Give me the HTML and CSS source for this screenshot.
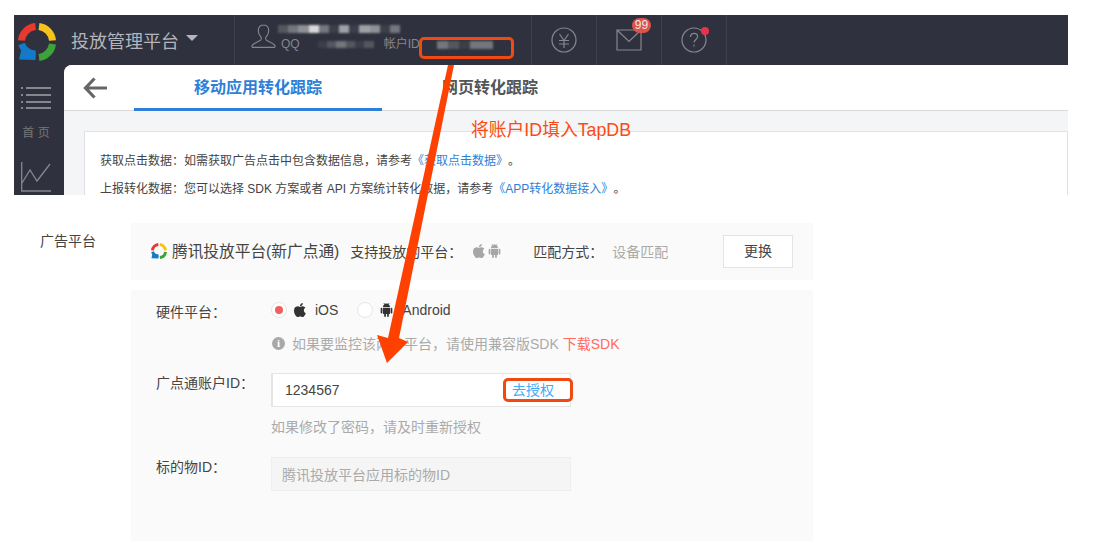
FILE: index.html
```html
<!DOCTYPE html>
<html lang="zh-CN">
<head>
  <meta charset="UTF-8" />
  <title>TapDB 广告平台配置</title>
  <link rel="stylesheet" href="styles.css">
</head>
<body>
  <svg class="defs" width="0" height="0">
    <symbol id="logo" viewBox="0 0 38 38">
      <g fill="none" stroke-width="7">
        <path d="M3.5 17.5A15.5 15.5 0 0 1 17.5 3.5" stroke="#e8392f" />
        <path d="M21 3.5A15.5 15.5 0 0 1 34.5 17.5" stroke="#f8c21c" />
        <path d="M34.500 21A15.500 15.500 0 0 1 21 34.500" stroke="#3ea23a" />
        <path d="M3.500 21A15.500 15.500 0 0 0 17.500 31" stroke="#1479c9" />
      </g>
      <path d="M1 36.500L3.500 26L17.500 28V37z" fill="#1479c9" />
    </symbol>
    <symbol id="apple" viewBox="3.500 3 16 18">
      <path d="M17.050 20.280c-.98.95-2.050.8-3.080.35-1.090-.46-2.090-.48-3.240 0-1.440.62-2.200.44-3.060-.35C2.790 15.250 3.510 7.590 9.050 7.310c1.350.07 2.290.74 3.080.8 1.180-.24 2.310-.93 3.570-.84 1.510.12 2.650.72 3.400 1.800-3.120 1.870-2.380 5.980.48 7.130-.57 1.500-1.310 2.990-2.540 4.090zM12.030 7.250c-.15-2.230 1.660-4.070 3.740-4.250.29 2.580-2.340 4.500-3.740 4.250z" />
    </symbol>
    <symbol id="android" viewBox="1.500 0 21 24">
      <path d="M6 18c0 .55.45 1 1 1h1v3.500c0 .83.67 1.500 1.500 1.500s1.500-.67 1.500-1.500V19h2v3.500c0 .83.67 1.500 1.500 1.500s1.500-.67 1.500-1.500V19h1c.55 0 1-.45 1-1V8H6v10zM3.500 8C2.670 8 2 8.670 2 9.500v7c0 .83.67 1.500 1.500 1.500S5 17.330 5 16.500v-7C5 8.670 4.330 8 3.500 8zm17 0c-.83 0-1.500.67-1.500 1.500v7c0 .83.67 1.500 1.500 1.500s1.500-.67 1.500-1.500v-7c0-.83-.67-1.500-1.500-1.500zm-4.970-5.840l1.300-1.300c.2-.2.2-.51 0-.71-.2-.2-.51-.2-.71 0l-1.480 1.480C13.850 1.230 12.950 1 12 1c-.96 0-1.860.23-2.660.63L7.850.15c-.2-.2-.51-.2-.71 0-.2.2-.2.51 0 .71l1.310 1.310C6.970 3.260 6 5.010 6 7h12c0-1.990-.97-3.750-2.470-4.840z" />
    </symbol>
  </svg>

  <!-- top screenshot -->
  <div class="shot">
    <header class="topbar">
      <div class="brand">
        <svg class="brand-logo"><use href="#logo" /></svg>
        <span class="brand-name">投放管理平台</span>
        <i class="caret"></i>
      </div>
      <div class="user">
        <svg class="user-icon" viewBox="0 0 24 24" fill="none" stroke="#85878d" stroke-width="1.100">
          <path d="M12 .8c-3.400 0-5 2.500-5 5.500 0 2.800 1.200 5 2.500 6.200.6.6.5 2.200-.3 3-1.500 1.300-7.200 2.800-8.200 5.300-.3.800 0 1.700.8 1.700h20.400c.8 0 1.100-.9.8-1.700-1-2.500-6.700-4-8.200-5.300-.8-.8-.9-2.400-.3-3 1.300-1.200 2.500-3.400 2.500-6.200 0-3-1.600-5.500-5-5.500z" />
        </svg>
        <div class="user-info">
          <div class="mosaic name-mosaic">
            <b class="t2"></b><b class="t3"></b><b class="t4"></b><b class="t6"></b><b class="t3"></b><b class="t1"></b><b class="t5"></b><b class="t1"></b><b class="t5"></b><b class="t4"></b><b class="t1"></b><b class="t3"></b>
          </div>
          <div class="user-ids">
            <span>QQ</span>
            <div class="mosaic qq-mosaic"><b class="t1"></b><b class="t2"></b><b class="t3"></b><b class="t2"></b><b class="t1"></b><b class="t2"></b></div>
            <span class="account-label">帐户ID</span>
            <div class="mosaic account-mosaic"><b class="t3"></b><b class="t2"></b><b class="t1"></b><b class="t3"></b><b class="t3"></b></div>
          </div>
        </div>
      </div>
      <div class="tool">
        <svg width="26" height="26" viewBox="0 0 26 26" fill="none" stroke="#85878d" stroke-width="1.200">
          <circle cx="13" cy="13" r="12" />
          <path d="M8.500 7l4.500 6.500L17.500 7M8 13.500h10M8 17h10M13 13.500V21" />
        </svg>
      </div>
      <div class="tool">
        <span class="mail-wrap">
          <svg width="26" height="24" viewBox="0 0 26 24" fill="none" stroke="#85878d" stroke-width="1.200">
            <path d="M1 2h24v20H1zM1 2l12 11.500L25 2" />
          </svg>
          <span class="badge">99</span>
        </span>
      </div>
      <div class="tool">
        <span class="help-wrap">
          <svg width="26" height="26" viewBox="0 0 26 26" fill="none" stroke="#85878d" stroke-width="1.200">
            <circle cx="13" cy="13" r="12" />
            <path d="M9.500 10c0-2.400 1.600-3.600 3.600-3.600s3.500 1.300 3.500 3.200c0 2.800-3.600 2.900-3.600 6" />
            <path d="M13 17.500v2" />
          </svg>
          <i class="dot"></i>
        </span>
      </div>
    </header>
    <div class="shot-body">
      <nav class="sidenav">
        <svg width="30" height="24" viewBox="0 0 30 24" fill="#85878d">
          <path d="M0 1h2v2H0zM5 1h25v2H5zM0 8h2v2H0zM5 8h25v2H5zM0 15h2v2H0zM5 15h25v2H5zM0 21h2v2H0zM5 21h25v2H5z" />
        </svg>
        <span class="nav-label">首 页</span>
        <svg class="nav-chart" width="30" height="32" viewBox="0 0 30 32" fill="none" stroke="#85878d" stroke-width="1.300">
          <path d="M.7 0v29H30M1 21l8-13 7 11L29 2" />
        </svg>
      </nav>
      <main class="content">
        <div class="tabs">
          <svg class="back" width="24" height="22" viewBox="0 0 24 22" fill="none" stroke="#666" stroke-width="3.200">
            <path d="M24 11H3M11.500 1.500L2.500 11l9 9.500" />
          </svg>
          <a class="tab active">移动应用转化跟踪</a>
          <a class="tab">网页转化跟踪</a>
        </div>
        <div class="content-body">
          <div class="panel">
            <p>获取点击数据：如需获取广告点击中包含数据信息，请参考<a>《获取点击数据》</a>。</p>
            <p>上报转化数据：您可以选择 SDK 方案或者 API 方案统计转化数据，请参考<a>《APP转化数据接入》</a>。</p>
          </div>
        </div>
      </main>
    </div>
  </div>

  <!-- lower screenshot -->
  <section class="platform">
    <div class="platform-label">广告平台</div>
    <div class="platform-cards">
      <div class="card summary">
        <svg class="small-logo"><use href="#logo" /></svg>
        <span class="summary-title">腾讯投放平台(新广点通)</span>
        <span class="summary-key">支持投放的平台：</span>
        <svg class="os-icon grey"><use href="#apple" /></svg>
        <svg class="os-icon grey"><use href="#android" /></svg>
        <span class="summary-key match-key">匹配方式：</span>
        <span class="muted">设备匹配</span>
        <button class="swap">更换</button>
      </div>
      <div class="card form">
        <div class="field-label first">硬件平台：</div>
        <div class="field-value">
          <div class="radios">
            <span class="radio checked"></span>
            <svg class="os-icon dark"><use href="#apple" /></svg>
            <span class="radio-text">iOS</span>
            <span class="radio second"></span>
            <svg class="os-icon dark"><use href="#android" /></svg>
            <span class="radio-text">Android</span>
          </div>
          <div class="hint">
            <i class="info">i</i>
            <span>如果要监控该两个平台，请使用兼容版SDK <a class="download">下载SDK</a></span>
          </div>
        </div>
        <div class="field-label account">广点通账户ID：</div>
        <div class="field-value account-value">
          <div class="input">
            <span>1234567</span>
            <a class="auth">去授权</a>
          </div>
          <div class="note">如果修改了密码，请及时重新授权</div>
        </div>
        <div class="field-label target">标的物ID：</div>
        <div class="field-value target-value">
          <div class="input disabled">腾讯投放平台应用标的物ID</div>
        </div>
      </div>
    </div>
  </section>

  <!-- annotations drawn on top of both screenshots -->
  <div class="mark mark-account"></div>
  <div class="mark mark-auth"></div>
  <div class="callout">将账户ID填入TapDB</div>
  <svg class="arrow" width="1094" height="554" viewBox="0 0 1094 554">
    <path d="M448 65L454 65L399 338L408 342L387 363L377 335L388 338z" fill="#fe4100" />
  </svg>
</body>
</html>
```

FILE: styles.css
```css
* {
  box-sizing: border-box;
}
html, body {
  height: 100%;
}
body {
  margin: 0;
  position: relative;
  overflow: hidden;
  background: #fff;
  color: #444;
  font-family: "Liberation Sans", "Noto Sans CJK SC", sans-serif;
  font-size: 14px;
  text-spacing-trim: space-all;
}
p {
  margin: 0;
}
.defs {
  position: absolute;
}

/* top screenshot */
.shot {
  width: 1054px;
  height: 180px;
  margin: 15px 0 0 14px;
  overflow: hidden;
  background: #2f323e;
}
.topbar {
  display: flex;
  height: 50px;
  color: #85878d;
}
.brand {
  display: flex;
  align-items: center;
  width: 221px;
  border-right: 1px solid #3e414c;
}
.brand-logo {
  width: 38px;
  height: 38px;
  margin: 3px 0 0 4px;
}
.brand-name {
  margin-left: 15px;
  font-size: 18px;
  color: #b4b5ba;
}
.caret {
  width: 0;
  height: 0;
  margin: 0 0 5px 7px;
  border: 6px solid transparent;
  border-top-color: #b4b5ba;
  border-bottom: 0;
}
.user {
  display: flex;
  width: 297px;
  padding: 9px 0 0 16px;
  border-right: 1px solid #3e414c;
}
.user-icon {
  width: 25px;
  height: 25px;
}
.user-info {
  margin-left: 2px;
}
.mosaic {
  display: flex;
  filter: blur(1px);
}
.mosaic b {
  display: block;
  flex: 1;
}
.t1 { background: #3c3f4a; }
.t2 { background: #55575f; }
.t3 { background: #74767d; }
.t4 { background: #909196; }
.t5 { background: #a0a1a6; }
.t6 { background: #d8d8da; }
.name-mosaic {
  width: 122px;
  height: 8px;
  margin-top: 1px;
}
.user-ids {
  display: flex;
  align-items: center;
  margin: 4px 0 0 3px;
  font-size: 12px;
  line-height: 14px;
}
.qq-mosaic {
  width: 56px;
  height: 7px;
  margin-left: 18px;
}
.account-label {
  margin-left: 10px;
}
.account-mosaic {
  width: 56px;
  height: 8px;
  margin: 2px 0 0 17px;
}
.tool {
  display: flex;
  align-items: center;
  justify-content: center;
  width: 65px;
  border-right: 1px solid #3e414c;
}
.mail-wrap, .help-wrap {
  position: relative;
  display: flex;
}
.badge {
  position: absolute;
  top: -10px;
  left: 16px;
  width: 19px;
  height: 15px;
  border-radius: 8px;
  background: #d8544c;
  color: #f3e3e2;
  font-size: 12px;
  line-height: 14px;
  text-align: center;
}
.dot {
  position: absolute;
  top: 0;
  right: -2px;
  width: 8px;
  height: 8px;
  border-radius: 50%;
  background: #e8334a;
}
.shot-body {
  display: flex;
  height: 130px;
}
.sidenav {
  display: flex;
  flex-direction: column;
  align-items: center;
  flex: none;
  width: 50px;
  padding: 21px 6px 0 0;
}
.nav-label {
  margin-top: 15px;
  font-size: 12px;
  line-height: 16px;
  color: #777;
}
.nav-chart {
  flex: none;
  margin-top: 21px;
}
.content {
  flex: 1;
  overflow: hidden;
  border-top-left-radius: 8px;
  background: #f4f5f6;
}
.tabs {
  display: flex;
  align-items: center;
  height: 46px;
  padding-left: 19px;
  background: #fff;
  border-bottom: 1px solid #d9d9d9;
}
.back {
  margin: 1px 27px 0 0;
}
.tab {
  width: 248px;
  height: 46px;
  font-size: 16px;
  font-weight: bold;
  line-height: 45px;
  text-align: center;
  color: #555;
}
.tab.active {
  border-bottom: 3px solid #2f7fd8;
  color: #2f7fd8;
}
.tab + .tab {
  width: 216px;
}
.content-body {
  padding: 20px 0 0 20px;
}
.panel {
  height: 70px;
  padding: 21px 0 0 15px;
  background: #fff;
  border: 1px solid #dfe1e4;
  font-size: 12px;
  line-height: 16px;
  white-space: nowrap;
}
.panel p {
  margin-bottom: 12px;
}
.panel a {
  color: #2f7fd8;
}

/* lower screenshot */
.platform {
  display: flex;
  margin-top: 28px;
  padding-left: 40px;
}
.platform-label {
  width: 91px;
  padding-top: 8px;
  line-height: 20px;
}
.platform-cards {
  width: 682px;
}
.card {
  background: #fafafa;
}
.summary {
  display: flex;
  align-items: center;
  height: 57px;
  padding: 0 20px 2px;
  margin-bottom: 10px;
}
.small-logo {
  flex: none;
  width: 16px;
  height: 16px;
}
.summary-title {
  margin-left: 5px;
  font-size: 15.700px;
  white-space: nowrap;
}
.summary-key {
  margin-left: 11px;
  white-space: nowrap;
}
.os-icon {
  flex: none;
  width: 13px;
  height: 14px;
}
.os-icon.grey {
  fill: #a6a6a6;
  margin-left: 3px;
}
.summary-key + .os-icon {
  margin-left: 10px;
}
.os-icon.dark {
  fill: #333;
}
.match-key {
  margin-left: 32px;
}
.muted {
  margin-left: 9px;
  color: #aaa;
  white-space: nowrap;
}
.swap {
  width: 70px;
  height: 33px;
  margin: 2px 0 0 auto;
  padding: 0 0 4px;
  background: #fff;
  border: 1px solid #e4e4e4;
  color: #444;
  font: inherit;
}
.form {
  display: grid;
  grid-template-columns: 115px 300px;
  align-content: start;
  height: 251px;
  padding: 11px 0 0 25px;
}
.field-label {
  line-height: 20px;
}
.field-label.first {
  padding-top: 1px;
}
.field-label.account {
  margin-top: 20px;
}
.field-label.target {
  margin-top: 20px;
}
.radios {
  display: flex;
  align-items: center;
  height: 18px;
}
.radio {
  position: relative;
  flex: none;
  width: 16px;
  height: 16px;
  border: 1px solid #e6e6e6;
  border-radius: 50%;
  background: #fff;
}
.radio.second {
  margin-left: 19px;
}
.radio.checked::after {
  content: "";
  position: absolute;
  top: 3px;
  left: 3px;
  width: 8px;
  height: 8px;
  border-radius: 50%;
  background: #f0605f;
}
.radios .os-icon {
  margin-left: 6px;
}
.radios .second + .os-icon {
  margin-left: 7px;
}
.radio-text {
  margin-left: 9px;
}
.hint {
  display: flex;
  align-items: center;
  height: 20px;
  margin-top: 14px;
  padding-left: 1px;
  color: #aaa;
  white-space: nowrap;
}
.info {
  flex: none;
  width: 13px;
  height: 13px;
  margin-right: 7px;
  border-radius: 50%;
  background: #a8a8a8;
  color: #fff;
  font-family: "Liberation Serif", serif;
  font-size: 11px;
  font-style: normal;
  font-weight: bold;
  line-height: 13px;
  text-align: center;
}
.download {
  color: #ff6b5e;
}
.input {
  display: flex;
  align-items: center;
  justify-content: space-between;
  height: 34px;
  padding: 0 16px 1px 12px;
  background: #fff;
  border: 1px solid #e5e5e5;
  border-left-width: 2px;
}
.account-value {
  margin-top: 20px;
}
.auth {
  margin-bottom: 2px;
  color: #3fa9f5;
}
.note {
  margin-top: 10px;
  line-height: 20px;
  color: #aaa;
}
.target-value {
  margin-top: 20px;
}
.input.disabled {
  border: 1px solid #eee;
  padding-left: 10px;
  background: #f5f5f5;
  color: #aaa;
}

/* annotations */
.mark {
  position: absolute;
  border: 3px solid #f04a12;
  border-radius: 5px;
}
.mark-account {
  left: 419px;
  top: 37px;
  width: 95px;
  height: 22px;
}
.mark-auth {
  left: 503px;
  top: 378px;
  width: 70px;
  height: 24px;
}
.callout {
  position: absolute;
  left: 471px;
  top: 120px;
  font-size: 17.800px;
  line-height: 20px;
  color: #fb4a13;
}
.arrow {
  position: absolute;
  left: 0;
  top: 0;
}
```
